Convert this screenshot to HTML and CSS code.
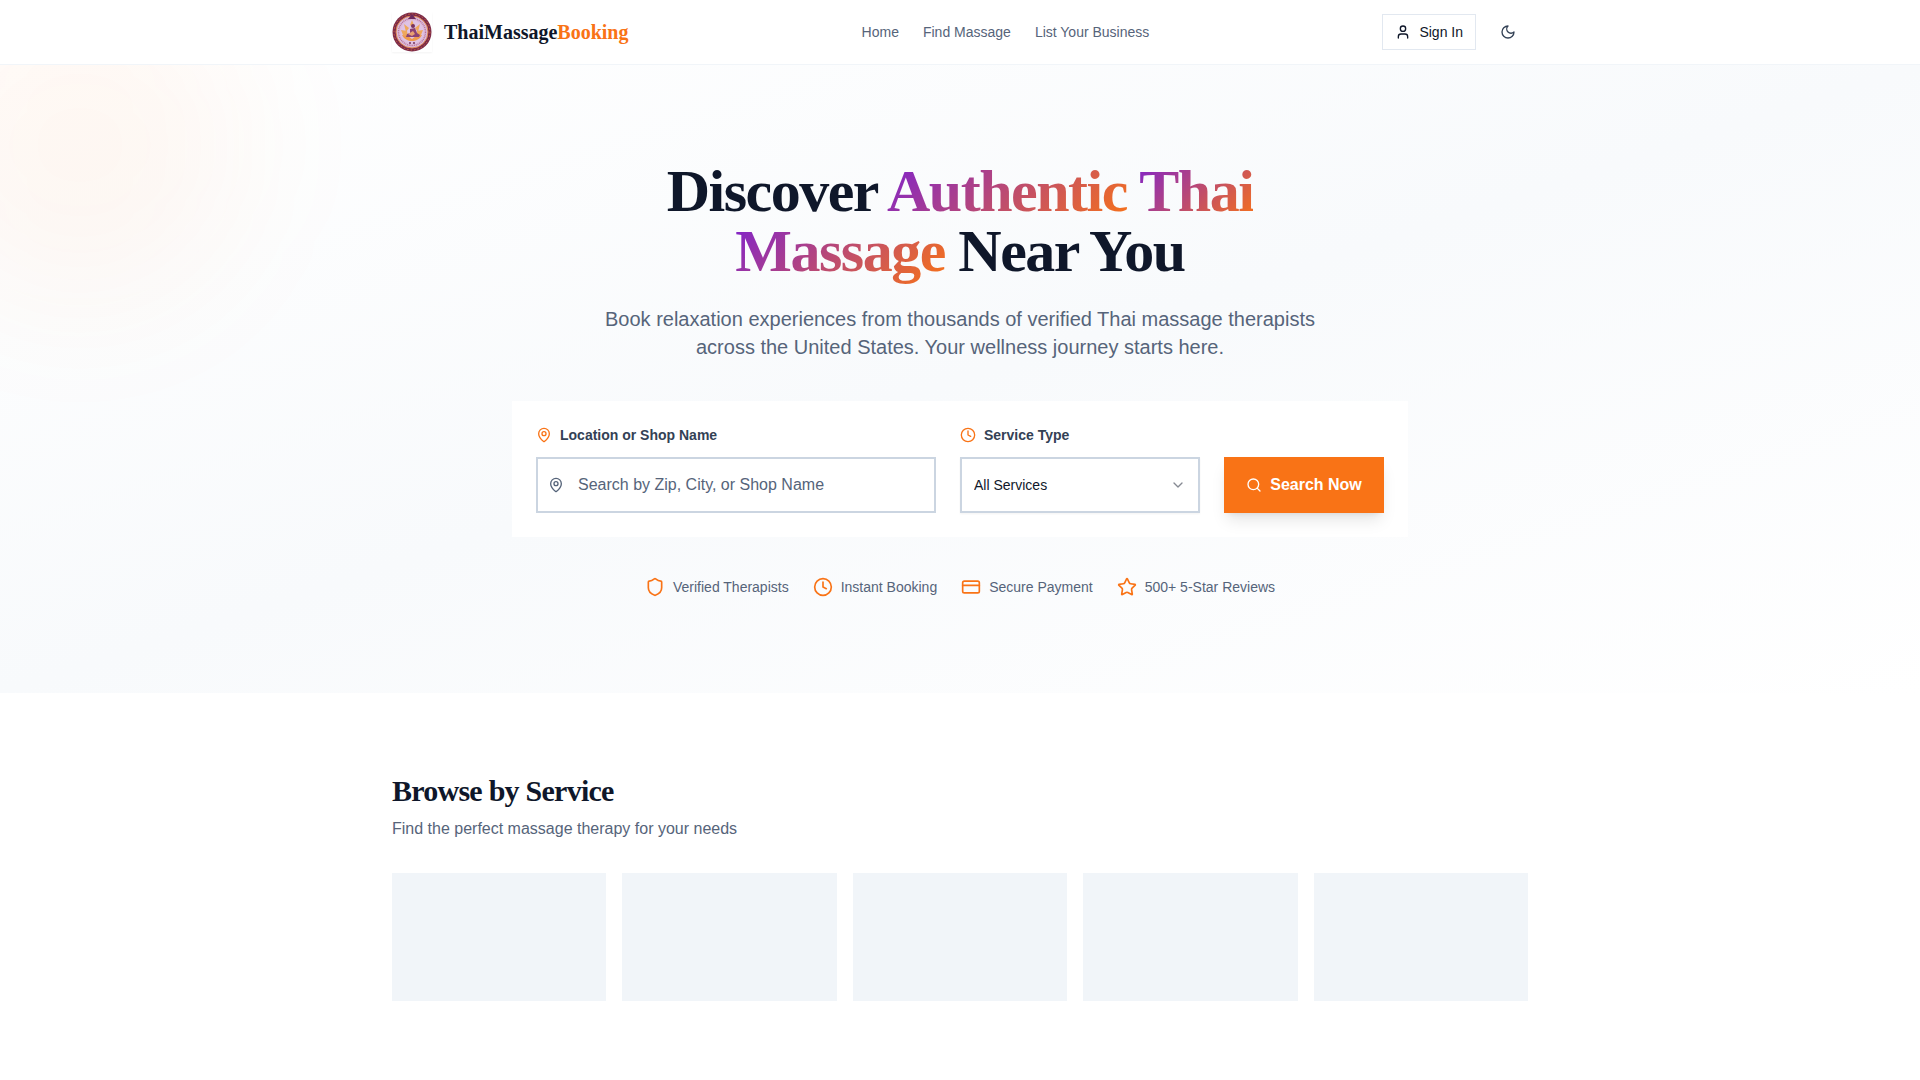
FILE: index.html
```html
<!DOCTYPE html>
<html lang="en">
<head>
  <meta charset="UTF-8">
  <meta name="viewport" content="width=device-width, initial-scale=1.0">
  <title>ThaiMassageBooking</title>
  <link rel="stylesheet" href="styles.css">
</head>
<body>
  <header class="site-header">
    <div class="container header-inner">
      <a href="#" class="brand">
        <svg class="brand-logo" viewBox="0 0 40 40" aria-hidden="true">
          <circle cx="20" cy="20" r="19.5" fill="#7c2a48"/>
          <circle cx="20" cy="20" r="18" fill="none" stroke="#c9643f" stroke-width="1" stroke-dasharray="1.5 2"/>
          <circle cx="20" cy="20" r="16" fill="#dcbbdc" stroke="#e08a52" stroke-width="1"/>
          <circle cx="20" cy="20" r="13.5" fill="none" stroke="#b87596" stroke-width="1.4" stroke-dasharray="1 0.8"/>
          <circle cx="20" cy="20" r="11.5" fill="#dfc3e4"/>
          <path d="M20 2l4 5h-8z" fill="#6b2a5c"/>
          <path d="M20 8l2 5-2 2-2-2zM9 18l6 1 1 6-5-2zM31 18l-6 1-1 6 5-2zM12 12l5 4-3 4zM28 12l-5 4 3 4z" fill="#efa85b"/>
          <path d="M10 23c4 0 6 1 10 4 4-3 6-4 10-4-2 4-6 6-10 6s-8-2-10-6z" fill="#ee9a4c"/>
          <circle cx="21" cy="14" r="2" fill="#77345f"/>
          <path d="M18 17l5-1 2 5 3 2-1 2H14l1-3 3-1z" fill="#8b4274"/>
          <path d="M16 22l5-3 2 3-3 2z" fill="#e8a070"/>
          <path d="M17 31h2M21 31h2" stroke="#77345f" stroke-width="1.5"/>
        </svg>
        <span class="brand-name">ThaiMassage<span class="brand-accent">Booking</span></span>
      </a>
      <nav class="main-nav">
        <a href="#">Home</a>
        <a href="#">Find Massage</a>
        <a href="#">List Your Business</a>
      </nav>
      <div class="header-actions">
        <button type="button" class="sign-in">
          <svg class="icon" viewBox="0 0 24 24"><path d="M19 21v-2a4 4 0 0 0-4-4H9a4 4 0 0 0-4 4v2"/><circle cx="12" cy="7" r="4"/></svg>
          Sign In
        </button>
        <button type="button" class="theme-toggle" aria-label="Toggle theme">
          <svg class="icon" viewBox="0 0 24 24"><path d="M12 3a6 6 0 0 0 9 9 9 9 0 1 1-9-9Z"/></svg>
        </button>
      </div>
    </div>
  </header>

  <main>
    <section class="hero">
      <div class="glow"></div>
      <div class="hero-content">
        <h1>Discover <span class="gradient-text">Authentic</span> <span class="gradient-text">Thai</span> <span class="gradient-text">Massage</span> Near You</h1>
        <p class="hero-text">Book relaxation experiences from thousands of verified Thai massage therapists across the United States. Your wellness journey starts here.</p>

        <form class="search-form">
          <div class="field field-location">
            <label for="location">
              <svg class="icon" viewBox="0 0 24 24"><path d="M20 10c0 4.993-5.539 10.193-7.399 11.799a1 1 0 0 1-1.202 0C9.539 20.193 4 14.993 4 10a8 8 0 0 1 16 0"/><circle cx="12" cy="10" r="3"/></svg>
              Location or Shop Name
            </label>
            <div class="control">
              <svg class="icon control-icon" viewBox="0 0 24 24"><path d="M20 10c0 4.993-5.539 10.193-7.399 11.799a1 1 0 0 1-1.202 0C9.539 20.193 4 14.993 4 10a8 8 0 0 1 16 0"/><circle cx="12" cy="10" r="3"/></svg>
              <input type="text" id="location" name="location" placeholder="Search by Zip, City, or Shop Name">
            </div>
          </div>
          <div class="field field-service">
            <label for="service">
              <svg class="icon" viewBox="0 0 24 24"><circle cx="12" cy="12" r="10"/><path d="M12 6v6l4 2"/></svg>
              Service Type
            </label>
            <div class="control">
              <select id="service" name="service">
                <option value="all">All Services</option>
              </select>
              <svg class="icon chevron" viewBox="0 0 24 24"><path d="m6 9 6 6 6-6"/></svg>
            </div>
          </div>
          <button type="submit" class="search-btn">
            <svg class="icon" viewBox="0 0 24 24"><circle cx="11" cy="11" r="8"/><path d="m21 21-4.300-4.300"/></svg>
            Search Now
          </button>
        </form>

        <ul class="features">
          <li>
            <svg class="icon icon-md" viewBox="0 0 24 24"><path d="M20 13c0 5-3.500 7.500-7.660 8.950a1 1 0 0 1-.67-.01C7.500 20.500 4 18 4 13V6a1 1 0 0 1 1-1c2 0 4.500-1.200 6.240-2.720a1.170 1.170 0 0 1 1.520 0C14.510 3.810 17 5 19 5a1 1 0 0 1 1 1z"/></svg>
            Verified Therapists
          </li>
          <li>
            <svg class="icon icon-md" viewBox="0 0 24 24"><circle cx="12" cy="12" r="10"/><path d="M12 6v6l4 2"/></svg>
            Instant Booking
          </li>
          <li>
            <svg class="icon icon-md" viewBox="0 0 24 24"><rect width="20" height="14" x="2" y="5" rx="2"/><path d="M2 10h20"/></svg>
            Secure Payment
          </li>
          <li>
            <svg class="icon icon-md" viewBox="0 0 24 24"><path d="M11.525 2.295a.53.53 0 0 1 .95 0l2.310 4.679a2.123 2.123 0 0 0 1.595 1.160l5.166.756a.53.53 0 0 1 .294.904l-3.736 3.638a2.123 2.123 0 0 0-.611 1.878l.882 5.140a.53.53 0 0 1-.771.560l-4.618-2.428a2.122 2.122 0 0 0-1.973 0L6.396 21.010a.53.53 0 0 1-.770-.560l.881-5.139a2.122 2.122 0 0 0-.611-1.879L2.160 9.795a.53.53 0 0 1 .294-.906l5.165-.755a2.122 2.122 0 0 0 1.597-1.160z"/></svg>
            500+ 5-Star Reviews
          </li>
        </ul>
      </div>
    </section>

    <section class="services container">
      <h2>Browse by Service</h2>
      <p>Find the perfect massage therapy for your needs</p>
      <div class="service-grid">
        <div class="skeleton"></div>
        <div class="skeleton"></div>
        <div class="skeleton"></div>
        <div class="skeleton"></div>
        <div class="skeleton"></div>
      </div>
    </section>
  </main>
</body>
</html>
```

FILE: styles.css
```css
* {
  box-sizing: border-box;
}

body {
  margin: 0;
  font-family: "Liberation Sans", Arial, sans-serif;
  font-size: 16px;
  line-height: 24px;
  background-color: #fff;
  color: #0f172a;
}

h1,
h2,
p,
ul {
  margin: 0;
  padding: 0;
}

a {
  color: inherit;
  text-decoration: none;
}

button,
input,
select {
  font-family: inherit;
  border-radius: 0;
}

button {
  cursor: pointer;
}

.container {
  max-width: 1200px;
  margin: 0 auto;
  padding: 0 32px;
}

.icon {
  width: 16px;
  height: 16px;
  flex-shrink: 0;
  fill: none;
  stroke: currentColor;
  stroke-width: 2;
  stroke-linecap: round;
  stroke-linejoin: round;
}

.icon-md {
  width: 20px;
  height: 20px;
}

/* Header */
.site-header {
  border-bottom: 1px solid #f1f5f9;
}

.header-inner {
  display: flex;
  align-items: center;
  justify-content: space-between;
  height: 64px;
}

.brand {
  display: flex;
  align-items: center;
  gap: 12px;
}

.brand-logo {
  width: 40px;
  height: 40px;
  box-shadow: 0 1px 2px rgba(0, 0, 0, 0.05);
}

.brand-name {
  font-family: "Liberation Serif", "Times New Roman", serif;
  font-size: 20px;
  font-weight: bold;
  line-height: 28px;
}

.brand-accent {
  color: #f97316;
}

.main-nav {
  display: flex;
  gap: 24px;
  font-size: 14px;
  line-height: 20px;
  color: #56647a;
}

.header-actions {
  display: flex;
  align-items: center;
  gap: 12px;
}

.sign-in {
  display: flex;
  align-items: center;
  gap: 8px;
  height: 36px;
  padding: 0 12px;
  border: 1px solid #e2e8f0;
  background-color: #fff;
  color: #0f172a;
  font-size: 14px;
}

.theme-toggle {
  display: flex;
  align-items: center;
  justify-content: center;
  width: 40px;
  height: 40px;
  padding: 0;
  border: none;
  background: none;
  color: #334155;
}

/* Hero */
.hero {
  position: relative;
  overflow: hidden;
  padding: 96px 32px;
  background: linear-gradient(to bottom right, #fff, #f8fafc, #fff);
}

.glow {
  position: absolute;
  top: -80px;
  left: -80px;
  width: 320px;
  height: 320px;
  border-radius: 50%;
  background-color: rgba(249, 115, 22, 0.05);
  filter: blur(64px);
}

.hero-content {
  position: relative;
  max-width: 896px;
  margin: 0 auto;
  text-align: center;
}

h1 {
  max-width: 768px;
  margin: 0 auto 24px;
  font-family: "Liberation Serif", "Times New Roman", serif;
  font-size: 60px;
  line-height: 60px;
  letter-spacing: -0.025em;
}

.gradient-text {
  background-image: linear-gradient(135deg, #7e22ce, #f97316);
  background-clip: text;
  -webkit-background-clip: text;
  color: transparent;
}

.hero-text {
  max-width: 768px;
  margin: 0 auto 40px;
  font-size: 20px;
  line-height: 28px;
  color: #56647a;
}

.search-form {
  display: flex;
  align-items: flex-end;
  gap: 24px;
  padding: 24px;
  margin-bottom: 40px;
  background-color: #fff;
}

.field-location {
  flex: 5;
}

.field-service {
  flex: 3;
}

.field label {
  display: flex;
  align-items: center;
  gap: 8px;
  margin-bottom: 12px;
  font-size: 14px;
  font-weight: bold;
  line-height: 20px;
  color: #334155;
}

.field label .icon {
  color: #f97316;
}

.control {
  position: relative;
}

.control input,
.control select {
  display: block;
  width: 100%;
  height: 56px;
  border: 2px solid #cbd5e1;
  background-color: #fff;
  color: #0f172a;
}

.control input {
  padding: 0 16px 0 40px;
  font-size: 16px;
}

.control input::placeholder {
  color: #56647a;
  opacity: 1;
}

.control select {
  appearance: none;
  padding: 0 40px 0 12px;
  font-size: 14px;
  box-shadow: 0 1px 2px rgba(0, 0, 0, 0.05);
}

.control-icon,
.chevron {
  position: absolute;
  top: 20px;
  pointer-events: none;
}

.control-icon {
  left: 12px;
  color: #56647a;
}

.chevron {
  right: 14px;
  color: #0f172a;
  opacity: 0.5;
}

.search-btn {
  display: flex;
  flex: 2;
  align-items: center;
  justify-content: center;
  gap: 8px;
  height: 56px;
  padding: 0;
  border: none;
  background-color: #f97316;
  color: #fff;
  font-size: 16px;
  font-weight: bold;
  white-space: nowrap;
  box-shadow: 0 10px 15px -3px rgba(0, 0, 0, 0.1), 0 4px 6px -4px rgba(0, 0, 0, 0.1);
}

.features {
  display: flex;
  flex-wrap: wrap;
  justify-content: center;
  gap: 24px;
  list-style: none;
  font-size: 14px;
  line-height: 20px;
  color: #56647a;
}

.features li {
  display: flex;
  align-items: center;
  gap: 8px;
}

.features .icon {
  color: #f97316;
}

/* Services */
.services {
  padding-top: 80px;
  padding-bottom: 80px;
}

.services h2 {
  margin-bottom: 8px;
  font-family: "Liberation Serif", "Times New Roman", serif;
  font-size: 30px;
  line-height: 36px;
  letter-spacing: -0.025em;
}

.services p {
  margin-bottom: 32px;
  color: #56647a;
}

.service-grid {
  display: grid;
  grid-template-columns: repeat(5, 1fr);
  gap: 16px;
}

.skeleton {
  height: 128px;
  background-color: #f1f5f9;
}
```
